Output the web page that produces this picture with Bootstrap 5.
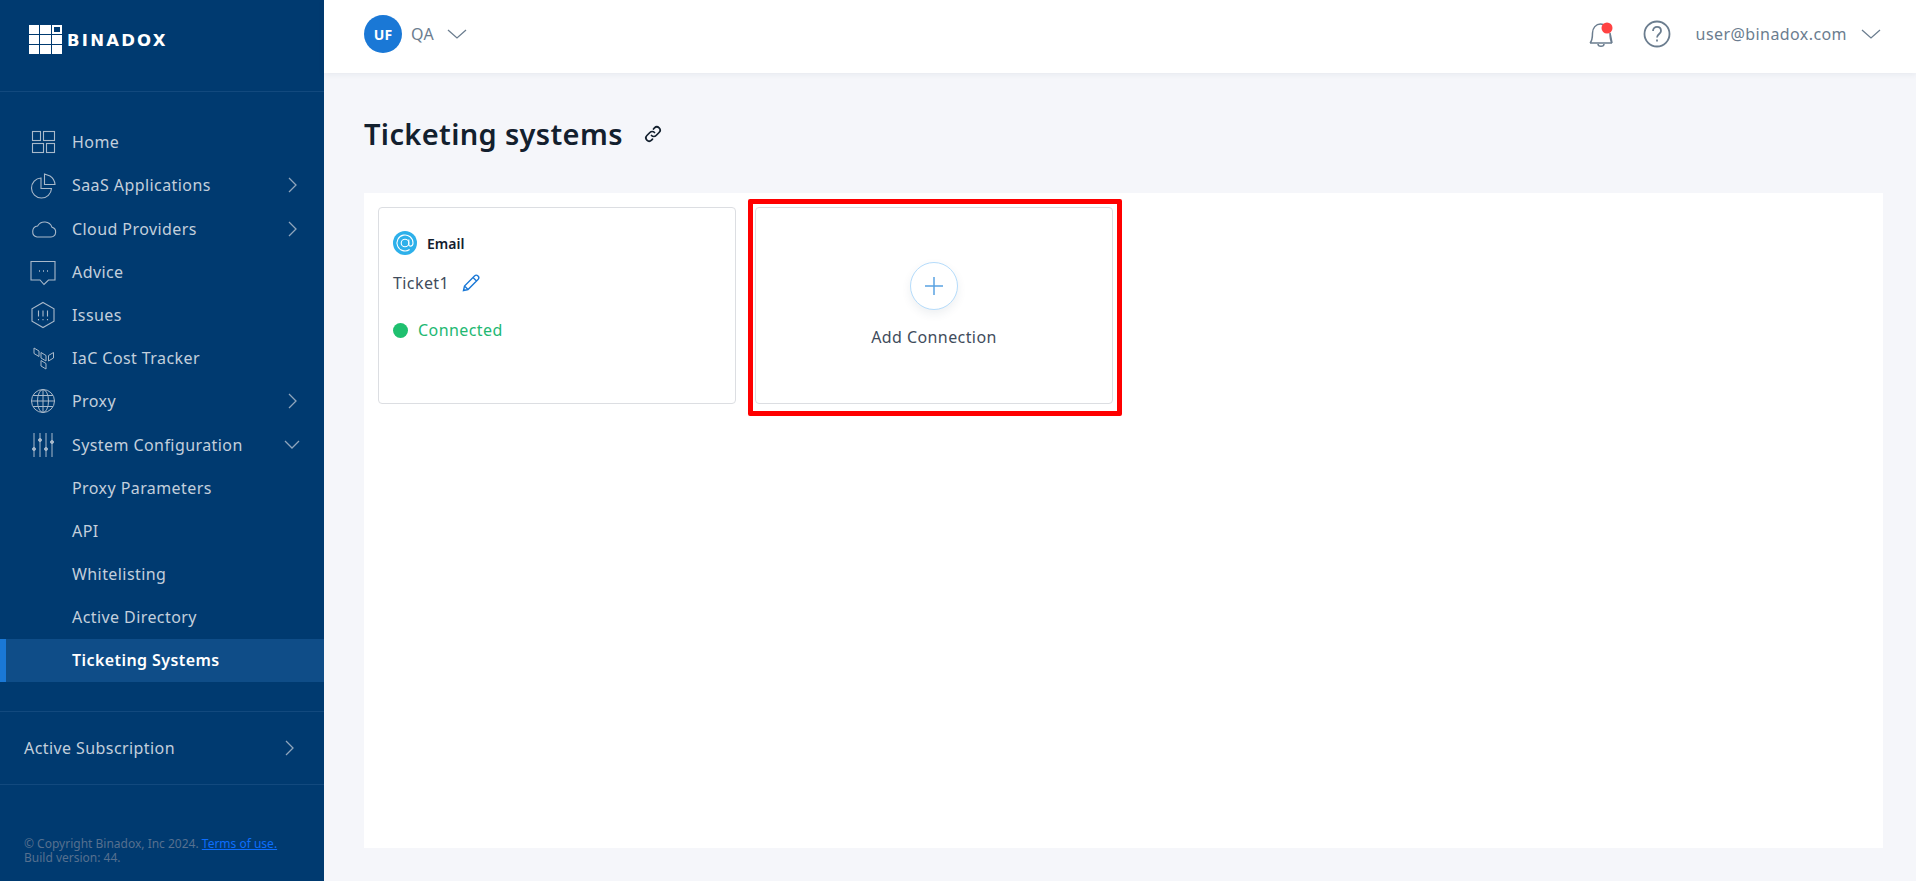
<!DOCTYPE html>
<html lang="en">
<head>
<meta charset="utf-8">
<title>Ticketing systems</title>
<link href="https://cdn.jsdelivr.net/npm/bootstrap@5.3.0/dist/css/bootstrap.min.css" rel="stylesheet">
<style>
html,body{height:100%;overflow:hidden}
body{font-family:"Noto Sans",sans-serif;background:#f5f6fa;font-size:16px;letter-spacing:.42px}
.app-shell{height:881px}
.side{width:324px;flex:none;background:#003a70;color:#c3cfdc}
.brand{height:92px;border-bottom:1px solid #12497e;padding:25px 0 0 29px;gap:5px}
.brand-word{font-family:"DejaVu Sans",sans-serif;font-weight:700;font-size:16.500px;letter-spacing:2.200px;color:#fff;line-height:20px;margin-top:6px}
.logo-grid{display:grid;grid-template-columns:repeat(3,10.300px);grid-auto-rows:9px;gap:1.100px;align-self:flex-start}
.logo-grid i{background:#fff;display:block}
.logo-grid i.hollow{background:none;border:2px solid #fff}
.menu{padding-top:28.600px}
.menu-row{height:43.200px;padding-left:29px;padding-right:26px;color:#c3cfdc;text-decoration:none}
.menu-ico{width:28px;height:28px;margin-right:15px;flex:none;color:#a9b9ca}
.menu-sub{padding-left:72px}
.menu-active{background:#0f4d88;color:#fff;font-weight:600;border-left:6px solid #1a78d6;padding-left:66px;padding-bottom:1px;padding-top:1px}
.chev{width:12px;height:20px;margin-left:auto;color:#8fa5bc;flex:none}
.chev-d{width:20px;height:12px;margin-left:auto;margin-right:-4px;color:#8fa5bc;flex:none}
.sub-box{margin-top:28.900px;height:74px;border-top:1px solid #12497e;border-bottom:1px solid #12497e;padding:0 29px 0 24px}
.foot{margin-top:52px;padding-left:24px;font-size:12px;line-height:14px;color:#56708f;letter-spacing:0}
.foot a{color:#0d6efd}
.top{height:73px;background:#fff;box-shadow:0 1px 6px rgba(40,60,90,.08);padding:0 34px 5px 40px;position:relative}
.avatar{width:38px;height:38px;border-radius:50%;background:#1a78d6;color:#fff;font-weight:700;font-size:14px;letter-spacing:0}
.muted-txt{color:#6b7d8f}
.qa-txt{margin-left:9px}
.qa-chev{margin-left:12px}
.help-ico{margin-left:28px}
.mail-txt{margin-left:25px}
.mail-chev{margin-left:13px}
.page-h{font-size:29px;font-weight:600;color:#13202e;line-height:38px;margin:0;letter-spacing:.35px}
.head-wrap{padding:42px 33px 0 40px}
.link-ico{margin-left:21px}
.panel{background:#fff;margin:40px 33px 0 40px;padding:14px;height:655px;gap:19px}
.tile{width:358px;height:197px;background:#fff;border:1px solid #dcdee2;border-radius:4px}
.tile-mail{padding:23px 13px 0 14px}
.tile-name{font-size:14px;font-weight:600;color:#13202e;margin-left:10px;letter-spacing:0}
.ticket-line{color:#3f4c5c;margin-top:17px;line-height:22px}
.pencil-ico{margin-left:13px}
.status-line{color:#22b872;margin-top:25px;line-height:22px}
.dot{width:15px;height:15px;border-radius:50%;background:#1fc06f;margin-right:10px}
.tile-add{padding-top:54px}
.plus-btn{width:48px;height:48px;border-radius:50%;border:1px solid #b5dcfb;background:#fff;box-shadow:0 4px 10px rgba(40,60,90,.08);color:#5aa2e2}
.add-label{color:#3f4c5c;margin-top:16px;line-height:22px}
.callout{position:absolute;top:-9px;left:-8px;right:-10px;bottom:-13px;border:5px solid #f00;border-radius:2px;pointer-events:none}
</style>
</head>
<body>
<div class="d-flex app-shell">
  <aside class="side d-flex flex-column">
    <div class="brand d-flex">
      <div class="logo-grid"><i></i><i></i><i class="hollow"></i><i></i><i></i><i></i><i></i><i></i><i></i></div>
      <div class="brand-word">BINADOX</div>
    </div>
    <nav class="menu">
      <a class="menu-row d-flex align-items-center" href="#"><svg class="menu-ico" viewBox="0 0 28 28" fill="none" stroke="currentColor" stroke-width="1.1"><rect x="3.500" y="3.500" width="8" height="9"/><rect x="14.500" y="3.500" width="11" height="9"/><rect x="3.500" y="15.500" width="11" height="9"/><rect x="17.500" y="15.500" width="8" height="9"/></svg>Home</a>
      <a class="menu-row d-flex align-items-center" href="#"><svg class="menu-ico" viewBox="0 0 28 28" fill="none" stroke="currentColor" stroke-width="1.1"><path d="M12 7a10 10 0 1 0 10.500 10.500H12z"/><path d="M15.500 3v10.500H26A11 11 0 0 0 21 5z"/></svg>SaaS Applications<svg class="chev" viewBox="0 0 12 20" fill="none" stroke="currentColor" stroke-width="1.3"><path d="M3 3l7 7-7 7"/></svg></a>
      <a class="menu-row d-flex align-items-center" href="#"><svg class="menu-ico" viewBox="0 0 28 28" fill="none" stroke="currentColor" stroke-width="1.1"><path d="M8 22h14a5 5 0 0 0 1-9.800A8 8 0 0 0 8.600 11 5.600 5.600 0 0 0 8 22z"/></svg>Cloud Providers<svg class="chev" viewBox="0 0 12 20" fill="none" stroke="currentColor" stroke-width="1.3"><path d="M3 3l7 7-7 7"/></svg></a>
      <a class="menu-row d-flex align-items-center" href="#"><svg class="menu-ico" viewBox="0 0 28 28" fill="none" stroke="currentColor" stroke-width="1.1"><path d="M2 3.500h24v18.500h-6.500L15 26.500l-4-4.500H2z"/><path d="M10 13h1M14 13h1M18 13h1" stroke-width="1.600"/></svg>Advice</a>
      <a class="menu-row d-flex align-items-center" href="#"><svg class="menu-ico" viewBox="0 0 28 28" fill="none" stroke="currentColor" stroke-width="1.1"><path d="M14 1.500l11 6.300v12.400l-11 6.300-11-6.300V7.800z"/><path d="M9.500 9.500v6M14 9.500v6M18.500 9.500v6M9.500 18v1.200M14 18v1.200M18.500 18v1.200"/></svg>Issues</a>
      <a class="menu-row d-flex align-items-center" href="#"><svg class="menu-ico" viewBox="0 0 28 28" fill="none" stroke="currentColor" stroke-width="1"><path d="M5 4l5 3v5.500L5 9.500zM12 8.500l5 3V17l-5-3zM24.500 8.500l-5 3V17l5-3zM12 16.500l5 3V25l-5-3z"/></svg>IaC Cost Tracker</a>
      <a class="menu-row d-flex align-items-center" href="#"><svg class="menu-ico" viewBox="0 0 28 28" fill="none" stroke="currentColor" stroke-width="1"><circle cx="14" cy="14" r="11.500"/><ellipse cx="14" cy="14" rx="5.500" ry="11.500"/><path d="M14 2.500v23M2.500 14h23M4 8.500h20M4 19.500h20"/></svg>Proxy<svg class="chev" viewBox="0 0 12 20" fill="none" stroke="currentColor" stroke-width="1.3"><path d="M3 3l7 7-7 7"/></svg></a>
      <a class="menu-row d-flex align-items-center" href="#"><svg class="menu-ico" viewBox="0 0 28 28" fill="none" stroke="currentColor" stroke-width="1"><path d="M5 2v24M11 2v24M17 2v24M23 2v24"/><circle cx="5" cy="18" r="1.500" fill="currentColor"/><circle cx="11" cy="9" r="1.500" fill="currentColor"/><circle cx="17" cy="18" r="1.500" fill="currentColor"/><circle cx="23" cy="11" r="1.500" fill="currentColor"/></svg>System Configuration<svg class="chev-d" viewBox="0 0 20 12" fill="none" stroke="currentColor" stroke-width="1.3"><path d="M3 2l7 7 7-7"/></svg></a>
      <a class="menu-row menu-sub d-flex align-items-center" href="#">Proxy Parameters</a>
      <a class="menu-row menu-sub d-flex align-items-center" href="#">API</a>
      <a class="menu-row menu-sub d-flex align-items-center" href="#">Whitelisting</a>
      <a class="menu-row menu-sub d-flex align-items-center" href="#">Active Directory</a>
      <a class="menu-row menu-sub menu-active d-flex align-items-center" href="#">Ticketing Systems</a>
    </nav>
    <div class="sub-box d-flex align-items-center">Active Subscription<svg class="chev" viewBox="0 0 12 20" fill="none" stroke="currentColor" stroke-width="1.3"><path d="M3 3l7 7-7 7"/></svg></div>
    <div class="foot">© Copyright Binadox, Inc 2024. <a href="#">Terms of use.</a><br>Build version: 44.</div>
  </aside>
  <main class="flex-grow-1 d-flex flex-column">
    <header class="top d-flex align-items-center">
      <div class="avatar d-flex align-items-center justify-content-center">UF</div>
      <span class="muted-txt qa-txt">QA</span>
      <svg class="qa-chev" width="22" height="12" viewBox="0 0 22 12" fill="none" stroke="#6b7d8f" stroke-width="1.300"><path d="M2 2l9 8 9-8"/></svg>
      <div class="ms-auto d-flex align-items-center">
        <svg width="28" height="30" viewBox="0 0 28 30" fill="none" stroke="#6b7d8f" stroke-width="1.500"><path d="M3 24c2-2 2.500-4 2.500-10 0-5 3.500-9 8-9 2 0 3.500.6 5 2M23 14c0 6 .5 8 2 10zM3 24h22M11 25c0 3 6 3 6 0"/><circle cx="20" cy="9" r="5.500" fill="#ff4242" stroke="none"/></svg>
        <svg class="help-ico" width="28" height="28" viewBox="0 0 28 28" fill="none" stroke="#6b7d8f" stroke-width="1.800"><circle cx="14" cy="14" r="12.500"/><path d="M10 11c0-5.500 8-5.500 8 0 0 3-4 3-4 6.500"/><path d="M14 19.500v2"/></svg>
        <span class="muted-txt mail-txt">user@binadox.com</span>
        <svg class="mail-chev" width="22" height="12" viewBox="0 0 22 12" fill="none" stroke="#6b7d8f" stroke-width="1.300"><path d="M2 2l9 8 9-8"/></svg>
      </div>
    </header>
    <div class="head-wrap d-flex align-items-center">
      <h1 class="page-h">Ticketing systems</h1>
      <svg class="link-ico" width="18" height="18" viewBox="0 0 18 18" fill="none" stroke="#13202e" stroke-width="1.700" stroke-linecap="round"><path d="M7.500 10.500a3.200 3.200 0 0 0 4.600 0l3-3a3.200 3.200 0 0 0-4.600-4.600L9.500 4"/><path d="M10.500 7.500a3.200 3.200 0 0 0-4.600 0l-3 3a3.200 3.200 0 0 0 4.600 4.600l1-1"/></svg>
    </div>
    <section class="panel d-flex align-items-start">
      <div class="tile tile-mail">
        <div class="d-flex align-items-center">
          <svg width="24" height="24" viewBox="0 0 24 24" fill="none"><circle cx="12" cy="12" r="12" fill="#2db0ea"/><circle cx="12" cy="12" r="3.800" stroke="#fff" stroke-width="1.100"/><path d="M15.800 8.500v5c0 2.400 4.200 2.400 4.200-1.500a8 8 0 1 0-3.400 6.500" stroke="#fff" stroke-width="1.100"/></svg>
          <span class="tile-name">Email</span>
        </div>
        <div class="ticket-line d-flex align-items-center">Ticket1
          <svg class="pencil-ico" width="18" height="18" viewBox="0 0 18 18" fill="none" stroke="#1a78d6" stroke-width="1.400"><path d="M1.500 16.500l1-4.500L12.500 2c1-1 2.500-1 3.500 0s1 2.500 0 3.500L6 15.500zM11 3.500l3.500 3.500M2.500 12L6 15.500"/></svg>
        </div>
        <div class="status-line d-flex align-items-center"><span class="dot"></span><span>Connected</span></div>
      </div>
      <div class="tile tile-add position-relative d-flex flex-column align-items-center">
        <div class="plus-btn d-flex align-items-center justify-content-center">
          <svg width="18" height="18" viewBox="0 0 18 18" stroke="currentColor" stroke-width="1.500"><path d="M9 0v18M0 9h18"/></svg>
        </div>
        <div class="add-label">Add Connection</div>
        <div class="callout"></div>
      </div>
    </section>
  </main>
</div>
<script src="https://cdn.jsdelivr.net/npm/bootstrap@5.3.0/dist/js/bootstrap.bundle.min.js"></script>
</body>
</html>
